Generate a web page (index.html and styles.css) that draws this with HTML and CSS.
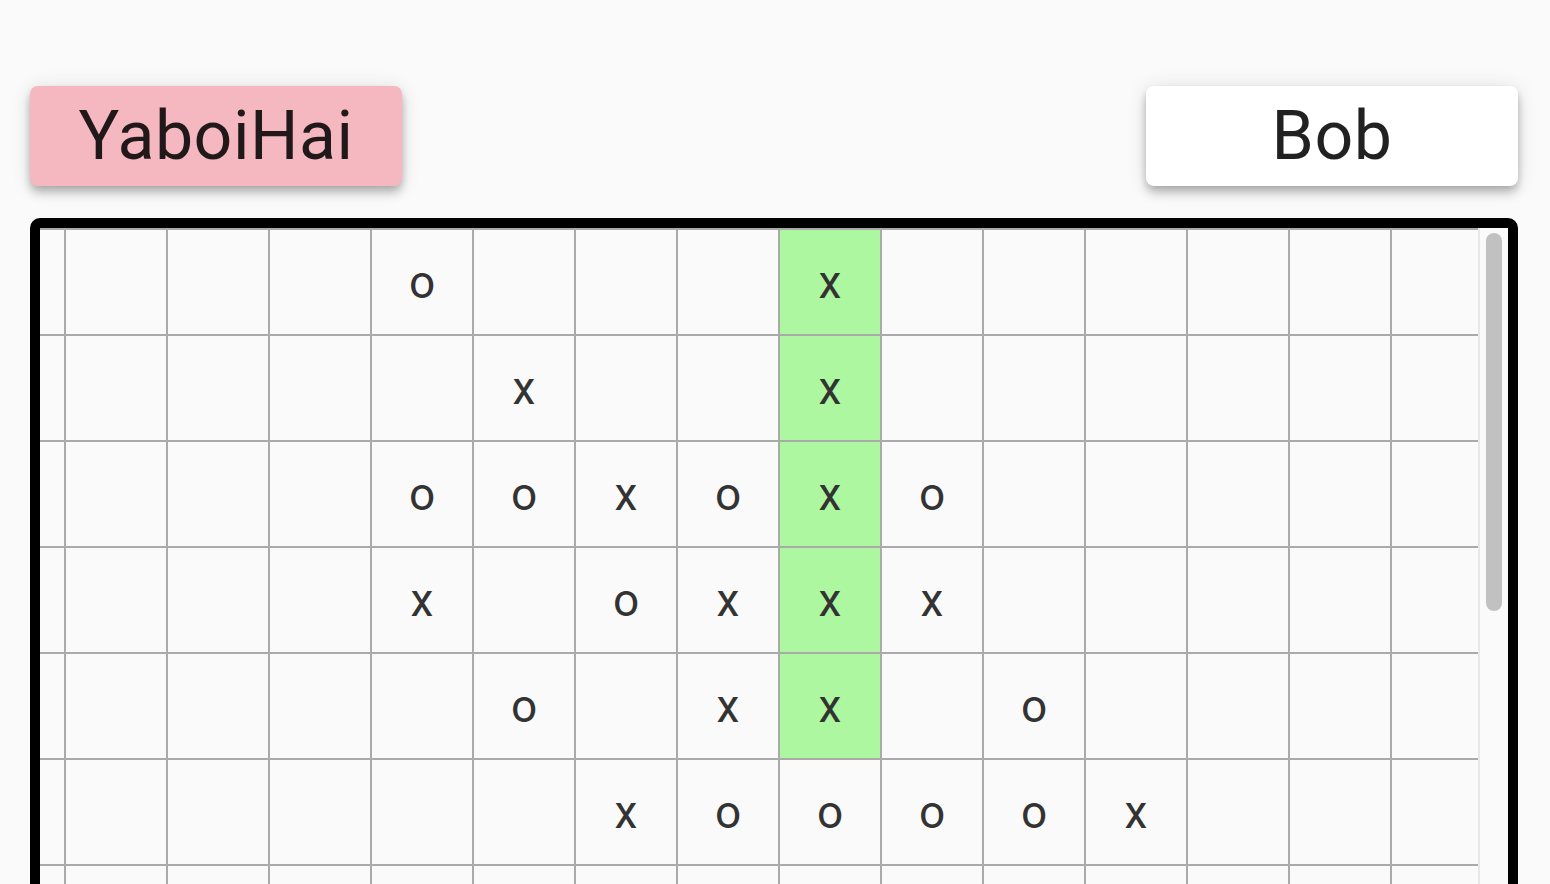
FILE: index.html
```html
<!DOCTYPE html>
<html>
<head>
<meta charset="utf-8">
<link rel="stylesheet" href="styles.css">
</head>
<body>
<div class="page">
  <div class="players">
    <div class="player active">YaboiHai</div>
    <div class="player">Bob</div>
  </div>
  <div class="board">
    <div class="scroller">
      <div class="grid">
        <!-- row 1 -->
        <div class="c"></div><div class="c"></div><div class="c"></div><div class="c"></div><div class="c">o</div><div class="c"></div><div class="c"></div><div class="c"></div><div class="c win">x</div><div class="c"></div><div class="c"></div><div class="c"></div><div class="c"></div><div class="c"></div><div class="c"></div>
        <!-- row 2 -->
        <div class="c"></div><div class="c"></div><div class="c"></div><div class="c"></div><div class="c"></div><div class="c">x</div><div class="c"></div><div class="c"></div><div class="c win">x</div><div class="c"></div><div class="c"></div><div class="c"></div><div class="c"></div><div class="c"></div><div class="c"></div>
        <!-- row 3 -->
        <div class="c"></div><div class="c"></div><div class="c"></div><div class="c"></div><div class="c">o</div><div class="c">o</div><div class="c">x</div><div class="c">o</div><div class="c win">x</div><div class="c">o</div><div class="c"></div><div class="c"></div><div class="c"></div><div class="c"></div><div class="c"></div>
        <!-- row 4 -->
        <div class="c"></div><div class="c"></div><div class="c"></div><div class="c"></div><div class="c">x</div><div class="c"></div><div class="c">o</div><div class="c">x</div><div class="c win">x</div><div class="c">x</div><div class="c"></div><div class="c"></div><div class="c"></div><div class="c"></div><div class="c"></div>
        <!-- row 5 -->
        <div class="c"></div><div class="c"></div><div class="c"></div><div class="c"></div><div class="c"></div><div class="c">o</div><div class="c"></div><div class="c">x</div><div class="c win">x</div><div class="c"></div><div class="c">o</div><div class="c"></div><div class="c"></div><div class="c"></div><div class="c"></div>
        <!-- row 6 -->
        <div class="c"></div><div class="c"></div><div class="c"></div><div class="c"></div><div class="c"></div><div class="c"></div><div class="c">x</div><div class="c">o</div><div class="c">o</div><div class="c">o</div><div class="c">o</div><div class="c">x</div><div class="c"></div><div class="c"></div><div class="c"></div>
        <!-- row 7 -->
        <div class="c"></div><div class="c"></div><div class="c"></div><div class="c"></div><div class="c"></div><div class="c"></div><div class="c"></div><div class="c"></div><div class="c"></div><div class="c"></div><div class="c"></div><div class="c"></div><div class="c"></div><div class="c"></div><div class="c"></div>
        <!-- row 8 -->
        <div class="c"></div><div class="c"></div><div class="c"></div><div class="c"></div><div class="c"></div><div class="c"></div><div class="c"></div><div class="c"></div><div class="c"></div><div class="c"></div><div class="c"></div><div class="c"></div><div class="c"></div><div class="c"></div><div class="c"></div>
      </div>
    </div>
    <div class="scrollbar">
      <div class="thumb"></div>
    </div>
  </div>
</div>
</body>
</html>
```

FILE: styles.css
```css
html, body {
  margin: 0;
  padding: 0;
  background: #fafafa;
  overflow: hidden;
  font-family: Roboto, "Liberation Sans", sans-serif;
}

.page {
  padding: 86px 32px 0 30px;
}

.players {
  display: flex;
  justify-content: space-between;
}

.player {
  width: 372px;
  height: 100px;
  display: flex;
  align-items: center;
  justify-content: center;
  background: #ffffff;
  border-radius: 8px;
  font-size: 68px;
  font-weight: 400;
  letter-spacing: 0.5px;
  color: rgba(0, 0, 0, 0.87);
  box-shadow: 0 4px 8px -2px rgba(0, 0, 0, 0.2), 0 8px 10px 0 rgba(0, 0, 0, 0.14), 0 2px 20px 0 rgba(0, 0, 0, 0.12);
}

.player.active {
  background: #f5b8c0;
}

.board {
  margin-top: 32px;
  border: 10px solid #000;
  border-radius: 10px;
  background: #fafafa;
  display: flex;
  height: 776px;
}

.scroller {
  flex: 1;
  min-width: 0;
  overflow: hidden;
}

.scrollbar {
  width: 28px;
  flex: none;
  border-left: 2px solid #e8e8e8;
  background: #fafafa;
  padding: 5px 6px 0 6px;
  box-sizing: content-box;
  width: 16px;
}

.thumb {
  height: 378px;
  border-radius: 8px;
  background: #c1c1c1;
}

.grid {
  display: grid;
  grid-template-columns: repeat(15, 102px);
  grid-auto-rows: 106px;
  width: max-content;
  margin-left: -78px;
}

.c {
  border-left: 2px solid #aaaaaa;
  border-top: 2px solid #aaaaaa;
  display: flex;
  align-items: center;
  justify-content: center;
  font-size: 46px;
  color: #333333;
}

.c.win {
  background: #adf7a0;
}
```
